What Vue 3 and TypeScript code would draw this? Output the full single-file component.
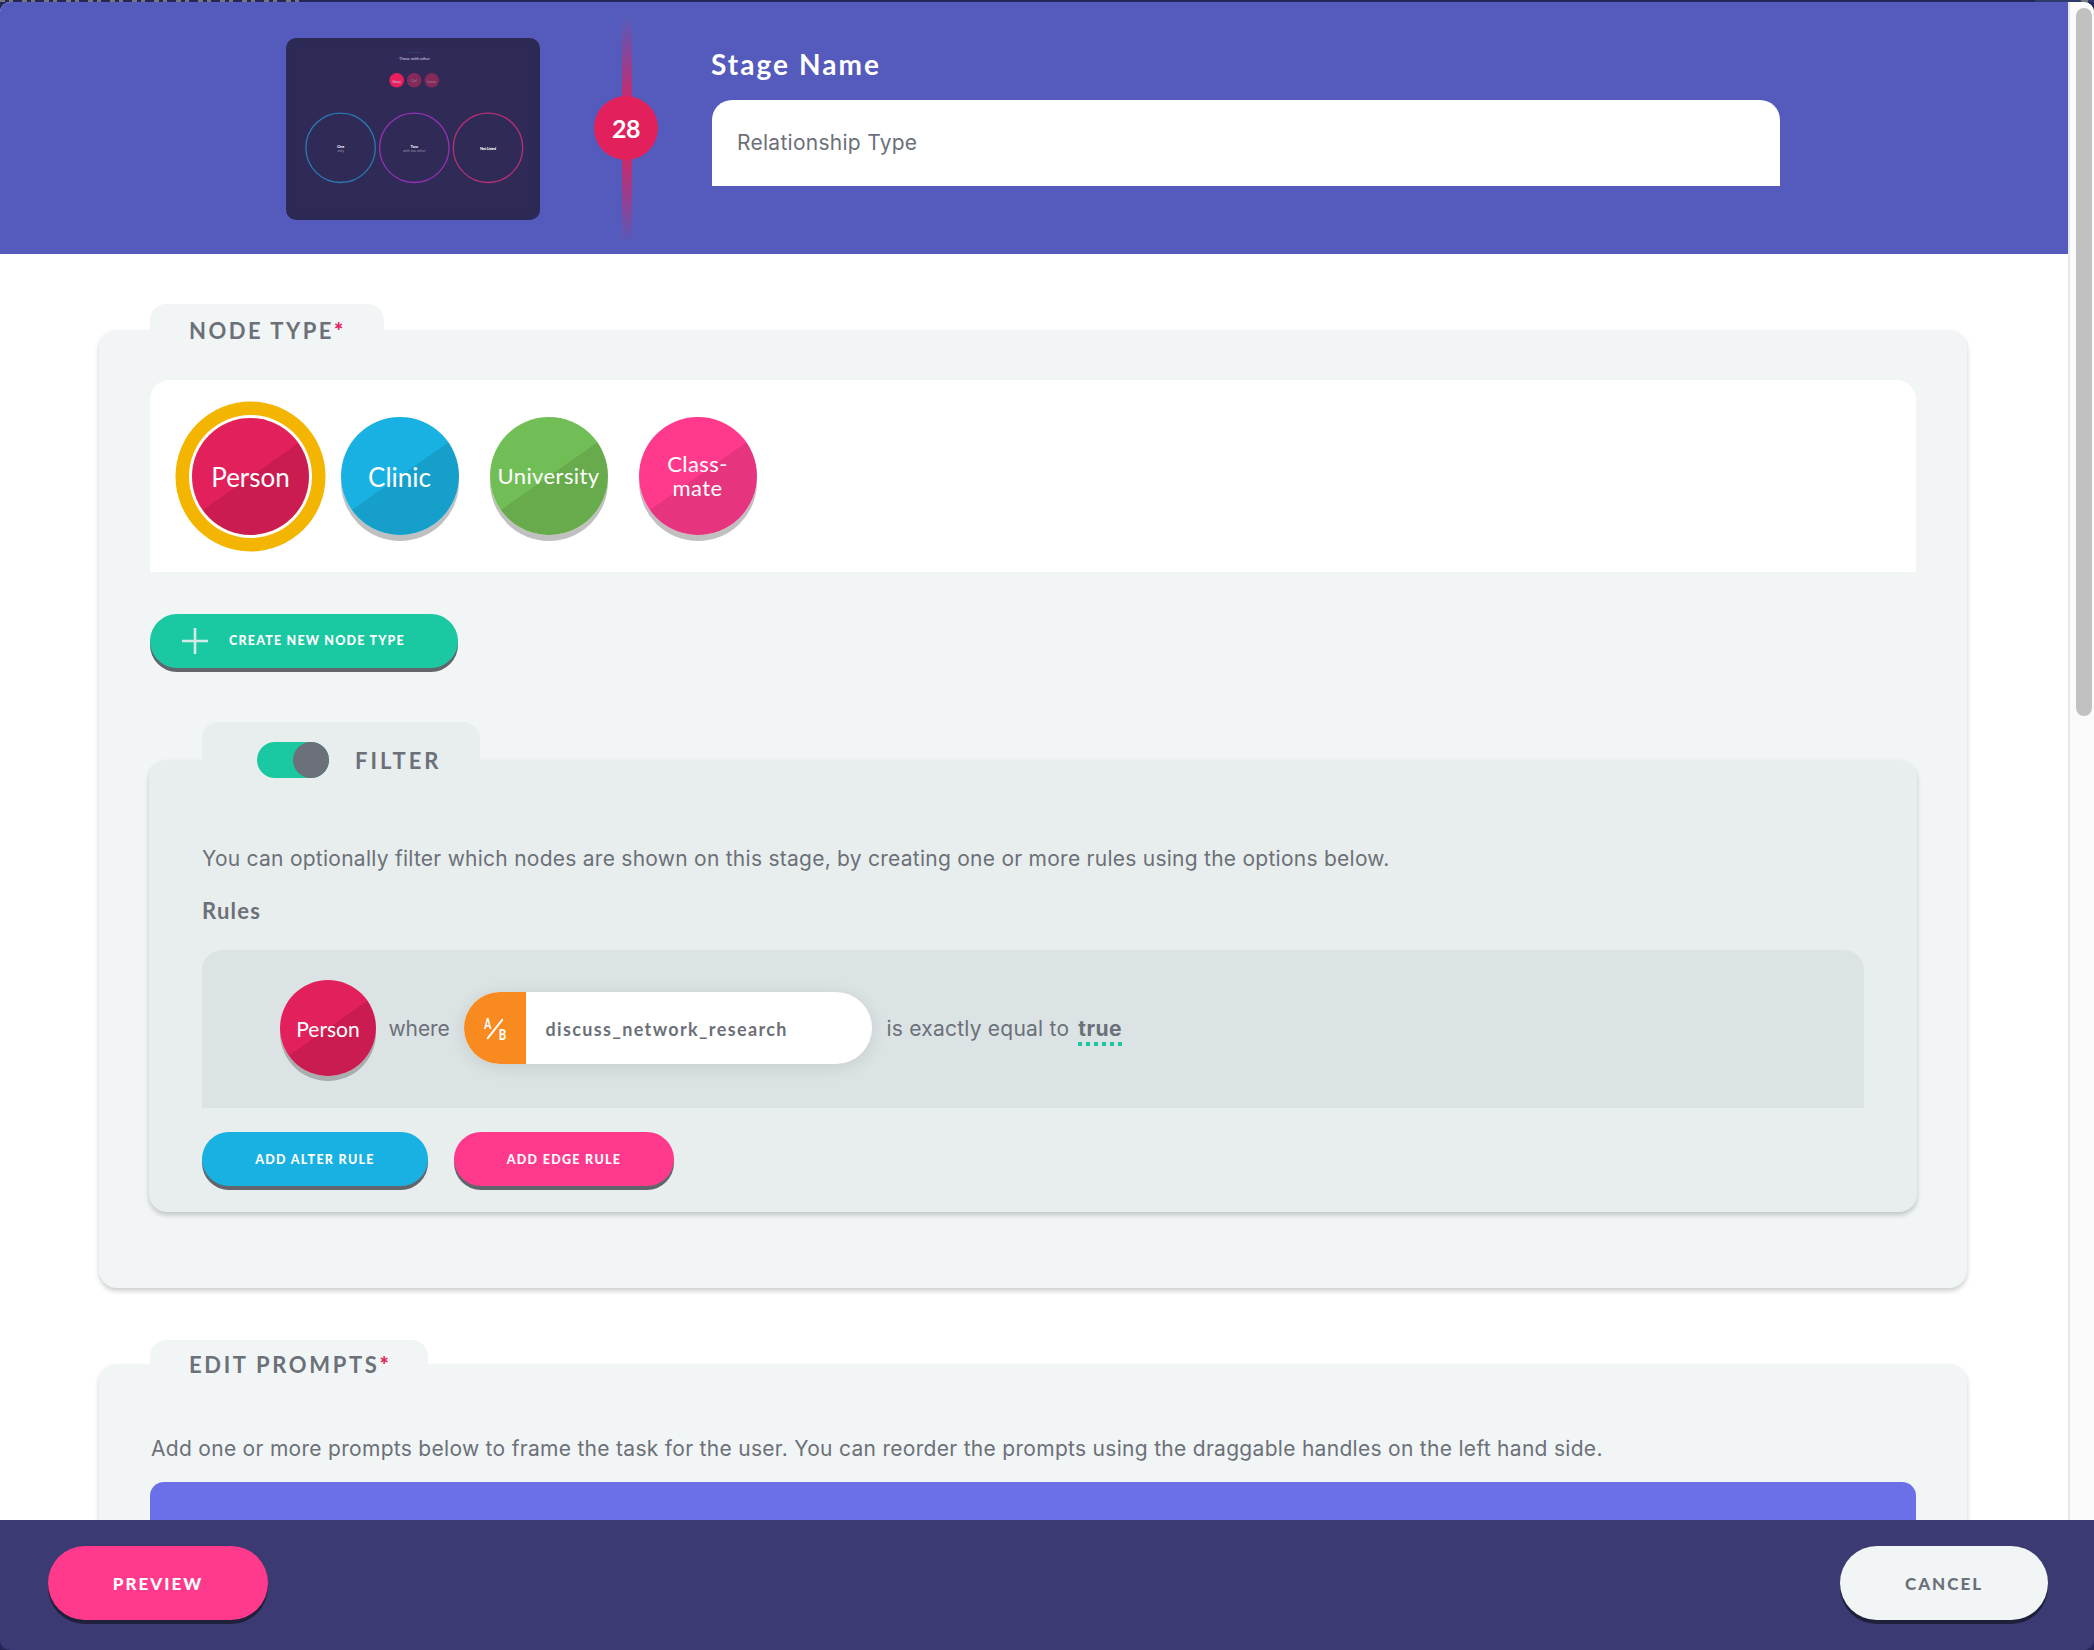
<script setup lang="ts">
interface NodeType {
  label: string[]
  color: string
  shade: string
  size: number
  selected?: boolean
}

const nodeTypes: NodeType[] = [
  { label: ['Person'], color: '#e2205b', shade: '#cb1c52', size: 26, selected: true },
  { label: ['Clinic'], color: '#19b1e2', shade: '#179fcb', size: 26 },
  { label: ['University'], color: '#72be56', shade: '#67ab4d', size: 22 },
  { label: ['Class-', 'mate'], color: '#ff3a8c', shade: '#e6347e', size: 22 },
]
</script>

<template>
  <div class="app">
    <div class="strip"><i class="behind"></i><i class="corner"></i></div>
    <div class="viewport">
      <main class="content">
        <header class="stage">
          <svg class="thumb" viewBox="0 0 254 182">
            <rect width="254" height="182" rx="10" fill="#2d2955" />
            <rect x="11" y="10" width="232" height="160" fill="#302a56" />
            <rect x="122" y="14" width="13" height="1" fill="#2b3d72" />
            <text x="128.500" y="21.500" class="tiny" font-size="4.500" textLength="31">Those with other</text>
            <circle cx="110.700" cy="42.300" r="7.300" fill="#e9205e" />
            <circle cx="128.200" cy="42.300" r="7.300" fill="#842959" />
            <circle cx="145.800" cy="42.300" r="7.300" fill="#842959" />
            <text x="110.700" y="45" class="tiny" font-size="3">Nancy</text>
            <text x="128.200" y="43.500" class="tiny dim" font-size="3">Carl</text>
            <text x="145.800" y="45" class="tiny dim" font-size="3">Jessica</text>
            <circle cx="54.600" cy="109.800" r="34.700" fill="none" stroke="#2b7ab4" stroke-width="1.300" />
            <circle cx="128.300" cy="109.800" r="34.700" fill="none" stroke="#9432b6" stroke-width="1.300" />
            <circle cx="202" cy="109.800" r="34.700" fill="none" stroke="#b63272" stroke-width="1.300" />
            <text x="54.700" y="110" class="tiny heavy" font-size="4">One</text>
            <text x="54.700" y="113.500" class="tiny dim" font-size="3.500">only</text>
            <text x="128.300" y="110" class="tiny heavy" font-size="4">Two</text>
            <text x="128.300" y="113.500" class="tiny dim" font-size="3.500">with one other</text>
            <text x="202" y="111.500" class="tiny heavy" font-size="4" textLength="16">Not Listed</text>
          </svg>
          <div class="timeline"><span class="badge">28</span></div>
          <div class="field">
            <h1>Stage Name</h1>
            <div class="input">Relationship Type</div>
          </div>
        </header>

        <section class="panel first">
          <h2 class="tab">NODE TYPE<b>*</b></h2>
          <div class="types">
            <div v-for="n in nodeTypes" :key="n.label[0]" class="slot">
              <div
                class="node"
                :class="{ selected: n.selected, small: n.size < 26 }"
                :style="{ '--c': n.color, '--s': n.shade }"
              >
                <span v-for="l in n.label" :key="l">{{ l }}</span>
              </div>
            </div>
          </div>
          <button class="btn create">
            <svg viewBox="0 0 26 26" width="26" height="26"><path d="M13 0V26M0 13H26" stroke="#d5e9e8" stroke-width="2.600" /></svg>
            <span>CREATE NEW NODE TYPE</span>
          </button>

          <section class="filter">
            <h2 class="tab"><i class="toggle"></i><span>FILTER</span></h2>
            <p>You can optionally filter which nodes are shown on this stage, by creating one or more rules using the options below.</p>
            <h3>Rules</h3>
            <div class="rule">
              <div class="node mini">Person</div>
              <span class="where">where</span>
              <div class="pill">
                <svg class="kind" viewBox="0 0 62 72">
                  <text x="20.300" y="36.800" textLength="7" lengthAdjust="spacingAndGlyphs">A</text>
                  <path d="M23.800 46.200L38.200 27.800" stroke="#fff" stroke-width="2" stroke-linecap="round" />
                  <text x="34.800" y="47.600" textLength="7.400" lengthAdjust="spacingAndGlyphs">B</text>
                </svg>
                <span>discuss_network_research</span>
              </div>
              <span class="op">is exactly equal to</span>
              <strong>true</strong>
            </div>
            <div class="actions">
              <button class="btn alter">ADD ALTER RULE</button>
              <button class="btn edge">ADD EDGE RULE</button>
            </div>
          </section>
        </section>

        <section class="panel second">
          <h2 class="tab">EDIT PROMPTS<b>*</b></h2>
          <p>Add one or more prompts below to frame the task for the user. You can reorder the prompts using the draggable handles on the left hand side.</p>
          <div class="prompt"></div>
        </section>
      </main>
      <aside class="track"><div class="thumbbar"></div></aside>
    </div>
    <footer>
      <button class="btn big preview">PREVIEW</button>
      <button class="btn big cancel">CANCEL</button>
    </footer>
  </div>
</template>

<style>
body { margin: 0; overflow: hidden; }
</style>

<style scoped>
* { box-sizing: border-box; }
.app { position: relative; width: 2094px; height: 1650px; overflow: hidden; display: flex; flex-direction: column; background: #25265a; color: #6c7078; font: 21px/30px Inter, sans-serif; letter-spacing: 0.27px; }
h1, h2, h3, p { margin: 0; }
.strip { height: 2px; flex: none; display: flex; justify-content: space-between; }
.behind { width: 300px; background: repeating-linear-gradient(90deg, #77777f 0 5px, transparent 5px 9px, #77777f 9px 13px, transparent 13px 22px); }
.corner { width: 59px; background: linear-gradient(90deg, #2d3a6b 46px, #77777f 46px 53px, #2d3a6b 53px); }
.viewport { height: 1518px; flex: none; display: flex; background: #fff; border-radius: 10px 10px 0 0; overflow: hidden; }
.content { width: 2068px; height: 1518px; overflow: hidden; }
h1, h2, h3, .btn, .node, .badge, .pill { font-family: Lato, sans-serif; }
.stage { height: 252px; background: #555bbc; display: flex; padding-left: 286px; }
.thumb { width: 254px; height: 182px; margin-top: 36px; }
.tiny { fill: #cfcde0; text-anchor: middle; font-family: Lato, sans-serif; letter-spacing: 0; }
.heavy { fill: #fff; font-weight: 700; }
.dim { fill: #9a93b5; }
.timeline { width: 10px; height: 228px; margin: 14px 0 0 82px; display: flex; align-items: center; justify-content: center; background: linear-gradient(transparent, #e2205b 45%, #e2205b 55%, transparent); }
.badge { flex: none; width: 64px; height: 64px; margin: 0 2px 4px 0; border-radius: 50%; background: #e2205b; color: #fff; font-weight: 700; font-size: 25px; letter-spacing: -0.5px; display: flex; align-items: center; justify-content: center; }
.field { margin-left: 80px; width: 1068px; }
h1 { color: #fff; font-size: 28px; line-height: 36px; margin: 44px 0 0 -1px; letter-spacing: 2.050px; }
.input { margin-top: 18px; height: 86px; border-radius: 20px 20px 0 0; background: #fff; padding: 28px 25px; }
.panel { width: 1868px; margin-left: 99px; padding: 0 51px; border-radius: 18px; background: #f1f5f6; box-shadow: 0 3px 5px rgba(0, 0, 0, 0.2); display: flow-root; }
.first { margin-top: 76px; height: 958px; }
.tab { white-space: nowrap; background: #f1f5f6; border-radius: 16px 16px 0 0; font-size: 22px; font-weight: 700; letter-spacing: 3px; display: flex; }
.tab b { color: #e2205b; }
.first > .tab { margin-top: -26px; width: 234px; height: 52px; padding: 12px 39px 0; letter-spacing: 2.500px; }
.types { margin-top: 24px; height: 192px; background: #fff; border-radius: 20px 20px 0 0; display: flex; align-items: center; padding-left: 26px; }
.slot { width: 149px; height: 150px; display: flex; align-items: center; justify-content: center; }
.node { width: 118px; height: 118px; flex: none; border-radius: 50%; background: linear-gradient(145deg, var(--c) 50%, var(--s) 50.2%); box-shadow: 0 6px 0 #c0c0c0; color: #fff; display: flex; flex-direction: column; align-items: center; justify-content: center; padding-top: 2px; font-size: 26px; line-height: 30px; letter-spacing: 0; }
.node.small { font-size: 22px; line-height: 24px; letter-spacing: 0.4px; padding-top: 0; }
.node.selected { width: 117px; height: 117px; box-shadow: 0 0 0 3px #fff, 0 0 0 16.500px #f3b500; }
.btn { border: 0; padding: 0; height: 54px; border-radius: 27px; color: #fff; font-weight: 900; font-size: 12.500px; letter-spacing: 1.300px; display: flex; align-items: center; justify-content: center; box-shadow: 0 4px 0 #62656c; }
.create { margin-top: 42px; width: 308px; background: #1ac9a2; justify-content: flex-start; padding-left: 32px; letter-spacing: 1.200px; }
.create span { margin: 0 0 2px 21px; }
.filter { margin: 92px 0 0 -1px; width: 1768px; height: 452px; padding: 0 53px; border-radius: 18px; background: #e8eeee; box-shadow: 0 3px 5px rgba(0, 0, 0, 0.2); display: flow-root; }
.filter .tab { margin-top: -38px; height: 76px; width: 278px; background: #e8eeee; align-items: center; padding-left: 55px; }
.filter .tab span { padding-top: 2px; }
.toggle { width: 72px; height: 36px; border-radius: 18px; background: #1ac9a2; display: flex; justify-content: flex-end; margin-right: 26px; }
.toggle::after { content: ''; width: 36px; height: 36px; border-radius: 50%; background: #6c7078; }
.filter p { margin-top: 46px; white-space: nowrap; letter-spacing: 0.255px; }
h3 { margin-top: 22px; font-size: 22px; line-height: 30px; letter-spacing: 1.200px; }
.rule { margin-top: 24px; width: 1662px; height: 158px; border-radius: 20px 20px 0 0; background: #dbe3e5; display: flex; align-items: center; padding: 0 0 2px 78px; }
.mini { width: 96px; height: 96px; --c: #e2205b; --s: #cb1c52; font-size: 21px; box-shadow: 0 5px 0 #a8adae; padding-top: 1px; }
.where, .op, .rule strong, .pill span { padding-top: 2px; }
.where { margin-left: 12.500px; letter-spacing: -0.1px; }
.pill { margin-left: 14.300px; width: 408px; height: 72px; border-radius: 36px; background: #fff; overflow: hidden; display: flex; align-items: center; font-weight: 700; font-size: 18px; letter-spacing: 1.370px; box-shadow: 0 3px 18px rgba(0, 0, 0, 0.1); }
.kind { width: 62px; height: 72px; background: #f98a1f; margin-right: 19.500px; font-size: 14.500px; font-weight: 900; letter-spacing: 0; fill: #fff; }
.op { margin-left: 14.500px; letter-spacing: 0.230px; }
.rule strong { position: relative; margin-left: 9px; letter-spacing: 0.5px; }
.rule strong::after { content: ''; position: absolute; left: 0; top: 30px; width: 44px; height: 4px; background: repeating-linear-gradient(90deg, #1ac9a2 0 4px, transparent 4px 8px); }
.actions { display: flex; margin-top: 24px; gap: 26px; }
.alter { width: 226px; background: #19b1e2; }
.edge { width: 220px; background: #ff3a8c; }
.second { margin-top: 76px; height: 400px; }
.second > .tab { margin-top: -24px; width: 278px; height: 50px; padding: 10px 39px 0; letter-spacing: 2.650px; }
.second p { margin: 44px 0 0 1px; white-space: nowrap; letter-spacing: 0.295px; }
.prompt { margin-top: 18px; height: 100px; border-radius: 14px; background: #6b70e8; }
.track { width: 26px; background: #fafafa; border-left: 2px solid #e8e8e8; padding: 6px 0 0 6px; }
.thumbbar { width: 16px; height: 708px; border-radius: 8px; background: #c1c1c1; }
footer { height: 130px; background: #3b3a73; border-radius: 0 0 10px 10px; display: flex; justify-content: space-between; padding: 26px 46px 0 48px; }
.big { height: 74px; border-radius: 37px; font-size: 17px; letter-spacing: 2px; box-shadow: 0 4px 0 #1f203a; }
.preview { width: 220px; background: #ff3a8c; }
.cancel { width: 208px; background: #f1f5f6; color: #6c7078; }
</style>
